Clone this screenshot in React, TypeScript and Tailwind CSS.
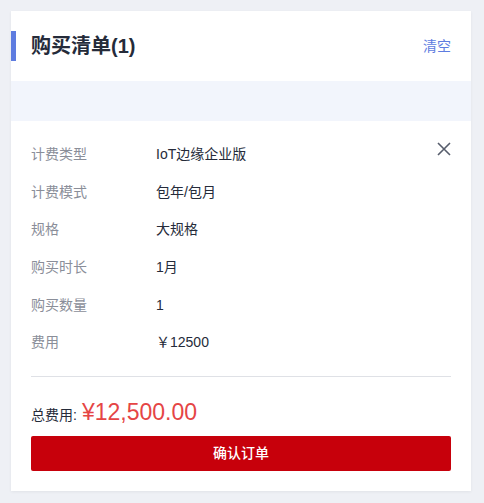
import React from "react";

const rows: [string, string][] = [
  ["计费类型", "IoT边缘企业版"],
  ["计费模式", "包年/包月"],
  ["规格", "大规格"],
  ["购买时长", "1月"],
  ["购买数量", "1"],
  ["费用", "￥12500"],
];

export default function App() {
  return (
    <div
      className="w-[484px] h-[503px] bg-[#eef0f5] pt-[11px] pl-[11px]"
      style={{ fontFamily: '"Liberation Sans", Arial, "Noto Sans CJK SC", sans-serif' }}
    >
      <div className="w-[460px] h-[480px] bg-white shadow-[0_1px_3px_rgba(0,0,0,0.06)] flex flex-col">
        <div className="h-[70px] flex items-center justify-between pr-[20px]">
          <div className="flex items-center">
            <div className="w-[5px] h-[30px] bg-[#5e7ce0]" />
            <span className="ml-[15px] text-[20px] font-bold text-[#252b3a] leading-none">购买清单(1)</span>
          </div>
          <span className="text-[14px] text-[#5e7ce0]">清空</span>
        </div>
        <div className="h-[40px] bg-[#f2f5fc]" />
        <div className="relative px-[20px] pt-[15px]">
          <svg
            className="absolute right-[20px] top-[21px]"
            width="14"
            height="14"
            viewBox="0 0 14 14"
            fill="none"
            stroke="#575d6c"
            strokeWidth="1.6"
          >
            <path d="M1 1L13 13M13 1L1 13" />
          </svg>
          {rows.map(([k, v]) => (
            <div key={k} className="h-[37.6px] flex items-center text-[14px]">
              <span className="w-[125px] text-[#8a8e99]">{k}</span>
              <span className="text-[#252b3a]">{v}</span>
            </div>
          ))}
          <div className="mt-[14px] h-px bg-[#dfe1e6]" />
          <div className="flex items-baseline mt-[18px] h-[28px]">
            <span className="text-[14px] text-[#252b3a]">总费用:</span>
            <span className="ml-[5px] text-[23px] text-[#e54545]">¥12,500.00</span>
          </div>
          <button className="mt-[13px] w-full h-[35px] rounded-[2px] bg-[#c7000b] text-white text-[14px] font-medium flex items-center justify-center">
            确认订单
          </button>
        </div>
      </div>
    </div>
  );
}
